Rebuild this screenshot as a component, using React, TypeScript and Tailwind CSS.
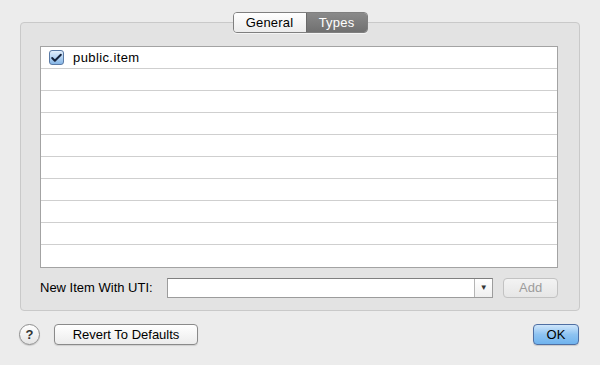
import { Check } from 'lucide-react'

const rows = Array.from({ length: 10 }, (_, i) => i)

function Row({ index }: { index: number }) {
  return (
    <div className={`flex h-[22px] items-center ${index < 9 ? 'border-b border-[#cfcfcf]' : ''}`}>
      {index === 0 && (
        <>
          <span className="ml-[8px] flex h-[15px] w-[15px] items-center justify-center rounded-[3px] border border-[#5a7aa5] bg-gradient-to-b from-[#e2effc] to-[#86b6e6]">
            <Check size={14} strokeWidth={3.6} color="#14213a" />
          </span>
          <span className="ml-[9px] text-[13px] tracking-[0.4px] text-black">public.item</span>
        </>
      )}
    </div>
  )
}

export default function App() {
  return (
    <div
      className="flex h-[365px] w-[600px] flex-col bg-[#ececec] text-[13px] text-black"
      style={{ fontFamily: '"Liberation Sans", Arial, sans-serif' }}
    >
      {/* Tabs */}
      <div className="relative z-10 flex justify-center pt-[12px]">
        <div className="flex h-[21px] overflow-hidden rounded-[4px] border border-[#7f7f7f] shadow-[0_1px_0_rgba(255,255,255,0.6)]">
          <button className="w-[72px] bg-gradient-to-b from-white to-[#ececec] text-[13px] leading-[19px] tracking-[0.2px] text-black">
            General
          </button>
          <button className="w-[61px] border-l border-[#6a6a6a] bg-gradient-to-b from-[#8a8a8a] to-[#707070] text-[13px] leading-[19px] tracking-[0.2px] text-white">
            Types
          </button>
        </div>
      </div>

      {/* Group box */}
      <div className="mx-[20px] -mt-[11px] flex h-[289px] flex-col rounded-[4px] border border-[#c9c9c9] bg-[#e3e3e3] pl-[19px] pr-[21px] pt-[23px]">
        <div className="flex flex-col border border-[#a3a3a3] bg-white">
          {rows.map(i => (
            <Row key={i} index={i} />
          ))}
        </div>

        <div className="mt-[10px] flex items-center">
          <span className="w-[128px] text-[13px]">New Item With UTI:</span>
          <div className="flex h-[20px] w-[328px] border border-[#9c9c9c] border-t-[#7f7f7f] bg-white">
            <div className="flex-1" />
            <div className="flex w-[18px] items-center justify-center border-l border-[#b5b5b5] bg-gradient-to-b from-white to-[#efefef]">
              <span className="text-[8px] text-[#333]">▼</span>
            </div>
          </div>
          <button className="ml-[10px] h-[20px] w-[55px] rounded-[4px] border border-[#c2c2c2] bg-gradient-to-b from-[#f3f3f3] to-[#e6e6e6] text-[13px] leading-[18px] text-[#9c9c9c]">
            Add
          </button>
        </div>
      </div>

      {/* Bottom buttons */}
      <div className="mt-[13px] flex items-center pl-[19px] pr-[21px]">
        <button className="flex h-[21px] w-[21px] items-center justify-center rounded-full border border-[#8e8e8e] bg-gradient-to-b from-white to-[#e4e4e4] text-[13px] font-bold leading-none text-[#333] shadow-[0_1px_1px_rgba(0,0,0,0.15)]">
          ?
        </button>
        <button className="ml-[14px] h-[21px] w-[144px] rounded-[4px] border border-[#8a8a8a] bg-gradient-to-b from-white to-[#ececec] text-[13px] leading-[19px] text-black shadow-[0_1px_1px_rgba(0,0,0,0.12)]">
          Revert To Defaults
        </button>
        <div className="flex-1" />
        <button className="h-[21px] w-[46px] rounded-[4px] border border-[#4f6fa3] bg-gradient-to-b from-[#cfe6fb] via-[#8ec3f1] to-[#6fb3ee] text-[13px] leading-[19px] text-black shadow-[0_1px_1px_rgba(0,0,0,0.15)]">
          OK
        </button>
      </div>
    </div>
  )
}
